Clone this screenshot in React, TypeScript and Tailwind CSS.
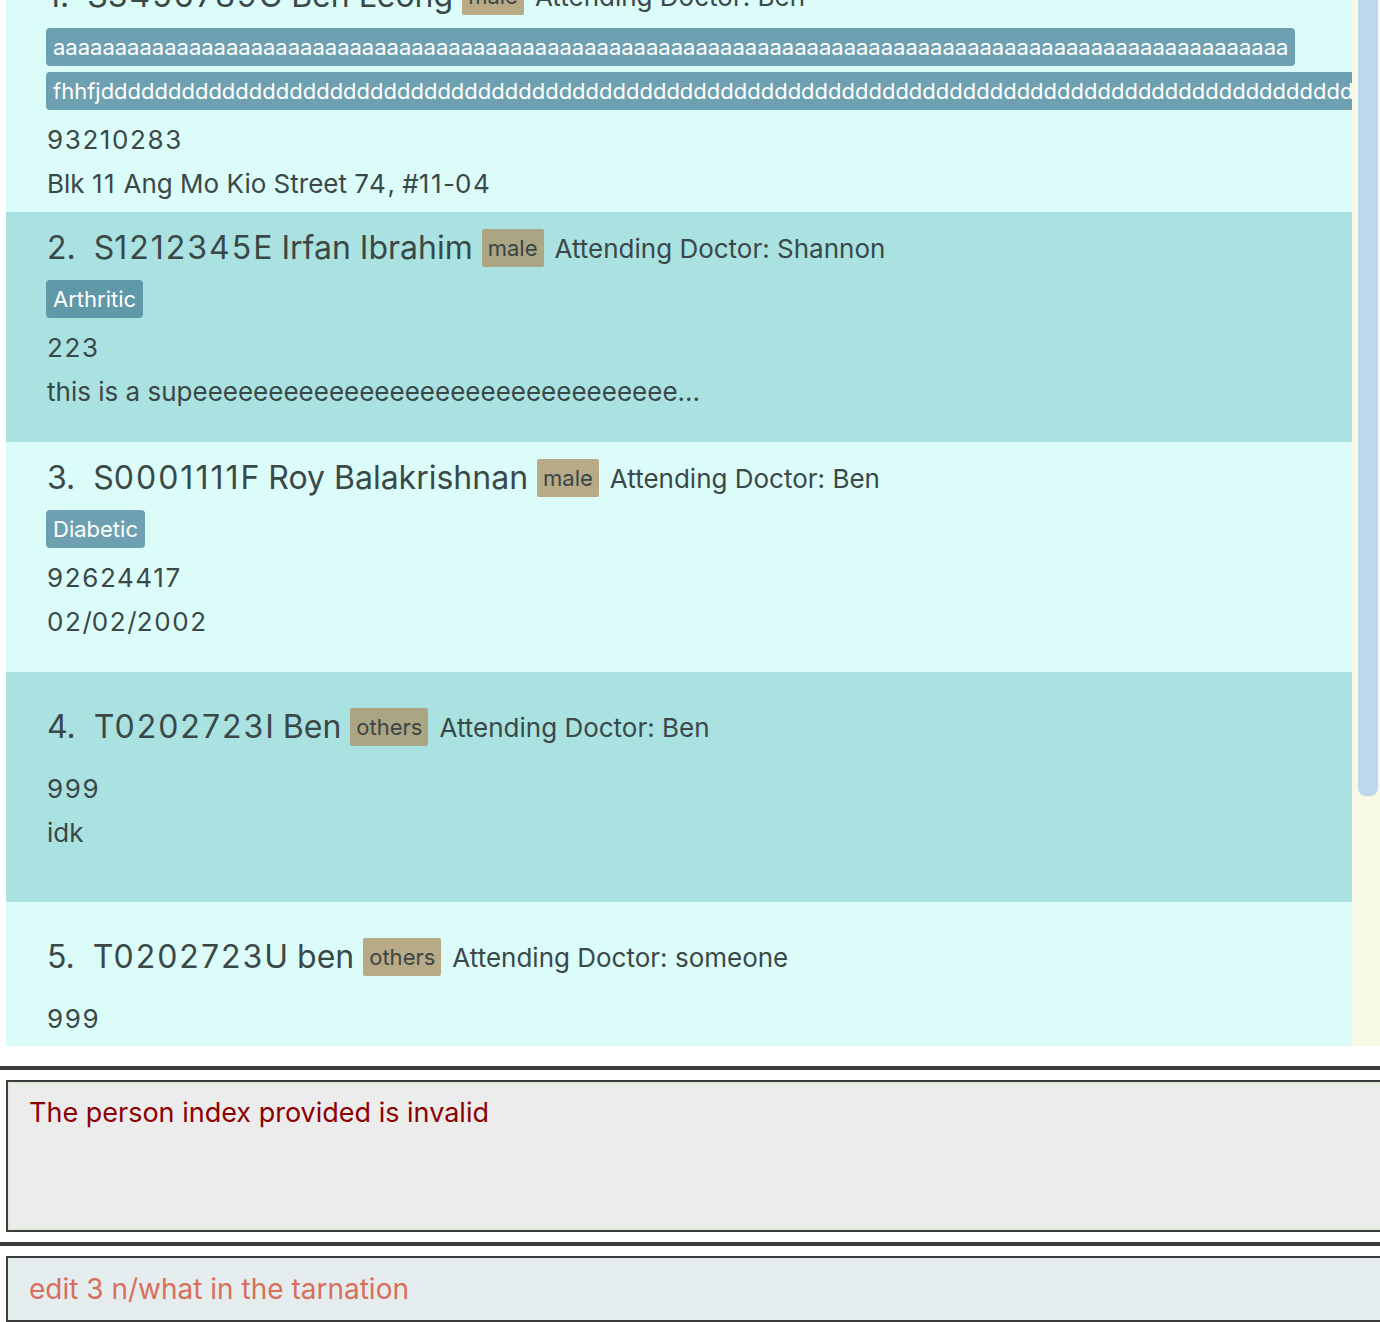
import React from "react";

type Person = {
  index: number;
  nric: string;
  name: string;
  sex: string;
  doctor: string;
  tags: string[];
  phone: string;
  address: string;
};

const persons: Person[] = [
  {
    index: 1,
    nric: "S3456789C",
    name: "Ben Leong",
    sex: "male",
    doctor: "Ben",
    tags: ["a".repeat(100), "fhhfj" + "d".repeat(110)],
    phone: "93210283",
    address: "Blk 11 Ang Mo Kio Street 74, #11-04",
  },
  {
    index: 2,
    nric: "S1212345E",
    name: "Irfan Ibrahim",
    sex: "male",
    doctor: "Shannon",
    tags: ["Arthritic"],
    phone: "223",
    address: "this is a sup" + "e".repeat(32) + "...",
  },
  {
    index: 3,
    nric: "S0001111F",
    name: "Roy Balakrishnan",
    sex: "male",
    doctor: "Ben",
    tags: ["Diabetic"],
    phone: "92624417",
    address: "02/02/2002",
  },
  {
    index: 4,
    nric: "T0202723I",
    name: "Ben",
    sex: "others",
    doctor: "Ben",
    tags: [],
    phone: "999",
    address: "idk",
  },
  {
    index: 5,
    nric: "T0202723U",
    name: "ben",
    sex: "others",
    doctor: "someone",
    tags: [],
    phone: "999",
    address: "idk",
  },
];

// digits in the original font run wider than Inter's, so space them out a bit
const Digits = ({ text, wide }: { text: string; wide?: boolean }) => (
  <>
    {text.split(/(\d+)/).map((part, i) =>
      /\d/.test(part) ? (
        <span key={i} className={wide ? "tracking-[2px]" : "tracking-[1.6px]"}>
          {part}
        </span>
      ) : (
        <React.Fragment key={i}>{part}</React.Fragment>
      )
    )}
  </>
);

const PersonCard = ({ person }: { person: Person }) => {
  const odd = person.index % 2 === 1;
  return (
    <div
      className={`h-[230px] flex flex-col justify-center pb-[13px] pl-[40px] overflow-hidden text-[#3a4848] ${
        odd ? "bg-[#dcfcfa]" : "bg-[#aae2e1]"
      }`}
    >
      {/* Header row */}
      <div className="h-[40px] flex items-center whitespace-nowrap shrink-0">
        <span className="text-[32px] ml-[1px]">{person.index}.</span>
        <span className="text-[32px] ml-[18px]">
          <Digits text={person.nric} wide /> {person.name}
        </span>
        <span
          className={`ml-[9px] h-[38px] px-[6px] flex items-center rounded-[2px] text-[22px] text-[#3a4646] ${
            odd ? "bg-[#b8aa86]" : "bg-[#aba583]"
          }`}
        >
          {person.sex}
        </span>
        <span className="ml-[11px] text-[26px]">
          Attending Doctor: {person.doctor}
        </span>
      </div>

      {/* Tags */}
      <div className="mt-[12px] flex flex-wrap gap-x-[8px] gap-y-[6px] shrink-0">
        {person.tags.map((tag) => (
          <span
            key={tag}
            className={`h-[38px] px-[7px] flex items-center rounded-[4px] text-[22px] text-white whitespace-nowrap shrink-0 ${
              odd ? "bg-[#6da0b0]" : "bg-[#5f98a6]"
            }`}
          >
            {tag}
          </span>
        ))}
      </div>

      <div className="mt-[7px] h-[44px] flex items-center text-[26px] ml-[1px] shrink-0">
        <Digits text={person.phone} />
      </div>
      <div className="h-[44px] flex items-center text-[26px] ml-[1px] whitespace-nowrap shrink-0">
        <span>
          <Digits text={person.address} />
        </span>
      </div>
    </div>
  );
};

export default function App() {
  return (
    <div
      className="w-[1380px] h-[1322px] bg-white overflow-hidden flex flex-col"
      style={{ fontFamily: "Inter, 'Noto Sans', sans-serif" }}
    >
      {/* Person list, scrolled down a little */}
      <div className="h-[1046px] flex pl-[6px] shrink-0">
        <div className="flex-1 overflow-hidden">
          <div className="-mt-[18px]">
            {persons.map((p) => (
              <PersonCard key={p.index} person={p} />
            ))}
          </div>
        </div>
        <div className="w-[28px] bg-[#f7f9e6] pl-[6px]">
          <div className="w-[20px] h-[796px] bg-[#bdd7ec] rounded-b-[8px]" />
        </div>
      </div>

      <div className="h-[20px] shrink-0" />
      <div className="h-[4px] bg-[#3c3c3c] shrink-0" />

      {/* Result display */}
      <div className="pt-[10px] pl-[6px] shrink-0">
        <div className="h-[152px] border-2 border-r-0 border-[#3c3c3c] bg-[#ececec]">
          <div className="h-full border-2 border-r-0 border-[#dcecd6] px-[19px] pt-[13px]">
            <p className="text-[27px] text-[#8b0000] leading-[32px]">
              The person index provided is invalid
            </p>
          </div>
        </div>
      </div>

      <div className="mt-[10px] h-[4px] bg-[#3c3c3c] shrink-0" />

      {/* Command box */}
      <div className="pt-[10px] pl-[6px] shrink-0">
        <div className="h-[66px] border-2 border-r-0 border-[#3c3c3c] bg-[#e4ecee] flex items-center px-[21px]">
          <span className="text-[28px] text-[#d86f5b]">
            edit 3 n/what in the tarnation
          </span>
        </div>
      </div>
    </div>
  );
}
